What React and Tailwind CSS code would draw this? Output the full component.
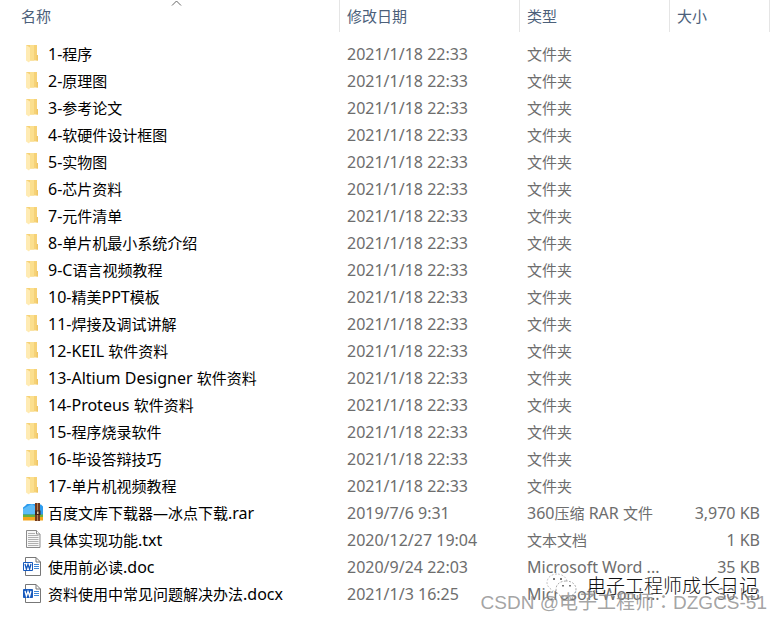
const DATE = "2021/1/18 22:33";

const folders = [
  "1-程序",
  "2-原理图",
  "3-参考论文",
  "4-软硬件设计框图",
  "5-实物图",
  "6-芯片资料",
  "7-元件清单",
  "8-单片机最小系统介绍",
  "9-C语言视频教程",
  "10-精美PPT模板",
  "11-焊接及调试讲解",
  "12-KEIL 软件资料",
  "13-Altium Designer 软件资料",
  "14-Proteus 软件资料",
  "15-程序烧录软件",
  "16-毕设答辩技巧",
  "17-单片机视频教程",
].map((name) => ({ name, icon: FolderIcon, date: DATE, type: "文件夹", size: "" }));

const files = [
  { name: "百度文库下载器—冰点下载.rar", icon: ArchiveIcon, date: "2019/7/6 9:31", type: "360压缩 RAR 文件", size: "3,970 KB" },
  { name: "具体实现功能.txt", icon: TextIcon, date: "2020/12/27 19:04", type: "文本文档", size: "1 KB" },
  { name: "使用前必读.doc", icon: DocIcon, date: "2020/9/24 22:03", type: "Microsoft Word ...", size: "35 KB" },
  { name: "资料使用中常见问题解决办法.docx", icon: DocxIcon, date: "2021/1/3 16:25", type: "Microsoft Word ...", size: "30 KB" },
];

function FolderIcon() {
  return (
    <svg width="20" height="20" viewBox="0 0 20 20" aria-hidden="true">
      <path d="M3 1h11v10.500l1 1V16.500H6z" fill="#f6d277" />
      <path d="M7 1h4v15.500H7z" fill="#fbdf8e" />
      <path d="M13.500 11h1.500v5.500h-1.500z" fill="#efc666" />
      <path d="M3 1l4 2.500V17l-1 1.500L3 16.500z" fill="#ffebb3" />
    </svg>
  );
}

function ArchiveIcon() {
  return (
    <svg width="20" height="20" viewBox="0 0 20 20" aria-hidden="true">
      <path d="M0 4.500L2 3l2-2h8l2 .5h4l2 2V12H0z" fill="#2d9cee" />
      <path d="M0 6l5-3 4-2 4 3v7H0z" fill="#5dbcf8" />
      <path d="M0 11.500h20V14H0z" fill="#6bb13b" />
      <path d="M0 14h20v3.500H0z" fill="#f3a51c" />
      <path d="M12 0h5v18h-5z" fill="#70391f" />
      <path d="M14 0h1v18h-1z" fill="#b78251" />
      <path d="M12 7.500h5.500V12H12z" fill="#42251a" />
      <path d="M14 8.500h1.500v2.500H14z" fill="#e9cda0" />
    </svg>
  );
}

function TextIcon() {
  return (
    <svg width="20" height="20" viewBox="0 0 20 20" aria-hidden="true">
      <path d="M3.500.5h10l3.500 3.500v13.500H3.500z" fill="#f7f7f7" stroke="#8b8b8b" />
      <path d="M13.500.5V4H17" fill="#fff" stroke="#8b8b8b" />
      <path d="M5 3.500h7M5 5.500h10.500M5 7.500h10.500M5 9.500h10.500M5 11.500h10.500M5 13.500h10.500M5 15.500h10.500" stroke="#b0b0b0" />
    </svg>
  );
}

function WordIcon({ filled }) {
  return (
    <svg width="20" height="20" viewBox="0 1 20 20" aria-hidden="true">
      <path d="M2.500 1.500h10.500l4.500 4.500v13.500h-15z" fill="#fff" stroke="#777" />
      <path d="M13 1.500V6h4.500" fill="none" stroke="#777" />
      <path d="M11 8.500h5M11 10.500h5M11 12.500h5" stroke="#3d86d8" />
      <path d="M.5 6.500h9v8H.5z" fill={filled ? "#185abd" : "#fff"} stroke="#185abd" />
      <path d="M2 8l1.400 5 1.600-4.500 1.600 4.500 1.400-5" fill="none" stroke={filled ? "#fff" : "#185abd"} strokeWidth="1.300" />
    </svg>
  );
}

function DocIcon() {
  return <WordIcon />;
}

function DocxIcon() {
  return <WordIcon filled />;
}

/* Latin runs are set one size up so that they balance the Chinese glyphs. */
function Mixed({ text }) {
  return text.split(/([\x20-\x7e]+)/).map((run, i) =>
    i % 2 ? <span key={i} className="text-[16px]">{run}</span> : run
  );
}

function Watermark() {
  return (
    <div aria-hidden="true" className="pointer-events-none absolute right-[15px] bottom-[-6px] flex flex-col items-end text-[19px] leading-[20px] whitespace-nowrap">
      <div className="mr-[9px] flex h-[20px] items-center gap-[9px] font-light text-[#111] [text-shadow:1px_1px_0_#fff,-1px_-1px_0_#fff]">
        <svg width="32" height="26" viewBox="0 0 32 26">
          <path d="M11 1C5 1 1 5 1 9.500c0 3 1.500 5 4 6.500l-1 3.500 4-2 4 .5c0-6 4-9 9-10C20 4 16 1 11 1z" fill="#fff" stroke="#aaa" strokeWidth=".7" strokeDasharray="2 1.500" />
          <path d="M20 8c-6 0-10 3.500-10 8s4 8 10 8l3-.5 3.500 2-.8-3C28.500 21 30 19 30 16c0-4.500-4-8-10-8z" fill="#fff" stroke="#888" strokeWidth=".7" strokeDasharray="2 1.500" />
          <path d="M7 5h2v2H7zM14 5h2v2h-2zM16 12h2v1.500h-2zM23 12h2v1.500h-2z" fill="#777" />
        </svg>
        电子工程师成长日记
      </div>
      <div className="-mt-[5px] font-['Liberation_Sans','Noto_Sans_CJK_SC',sans-serif] text-[#8c8c8c]/80">
        CSDN @电子工程师<span className="font-['Noto_Sans_CJK_TC',sans-serif]">：</span>DZGCS-51
      </div>
    </div>
  );
}

export default function App() {
  const head = "h-8 border-r border-[#e5e5e5] pl-[7px] text-left font-normal";
  return (
    <main className="min-h-screen bg-white font-['Noto_Sans','Noto_Sans_CJK_SC',sans-serif] text-[15px] leading-[20px]">
      <div className="relative">
        <table className="w-full table-fixed border-separate border-spacing-0 whitespace-nowrap">
          <colgroup>
            <col />
            <col className="w-[180px]" />
            <col className="w-[150px]" />
            <col className="w-[100px]" />
            <col className="w-[12px]" />
          </colgroup>
          <thead className="text-[#4c607a]">
            <tr>
              <th scope="col" aria-sort="ascending" className="relative h-8 border-r border-[#e5e5e5] pl-[21px] text-left font-normal">
                名称
                <svg className="absolute top-0 left-[171px]" width="11" height="7" viewBox="0 0 11 7" aria-hidden="true">
                  <path d="M1 5.500l4.500-4.500L10 5.500" fill="none" stroke="#666" />
                </svg>
              </th>
              <th scope="col" className={head}>修改日期</th>
              <th scope="col" className={head}>类型</th>
              <th scope="col" className={head}>大小</th>
              <td />
            </tr>
          </thead>
          <tbody className="text-[#6d6d6d] before:block before:h-[8px] before:content-['']">
            {[...folders, ...files].map(({ name, icon: Icon, date, type, size }) => (
              <tr key={name} className="h-[27px]">
                <td className="p-0 text-black">
                  <div className="flex items-center gap-[5px] pl-[23px]">
                    <Icon />
                    <span><Mixed text={name} /></span>
                  </div>
                </td>
                <td className="p-0 pl-[7px]"><Mixed text={date} /></td>
                <td className="p-0 pl-[7px]"><Mixed text={type} /></td>
                <td className="p-0 pr-[10px] text-right"><Mixed text={size} /></td>
                <td />
              </tr>
            ))}
          </tbody>
        </table>
        <Watermark />
      </div>
    </main>
  );
}
